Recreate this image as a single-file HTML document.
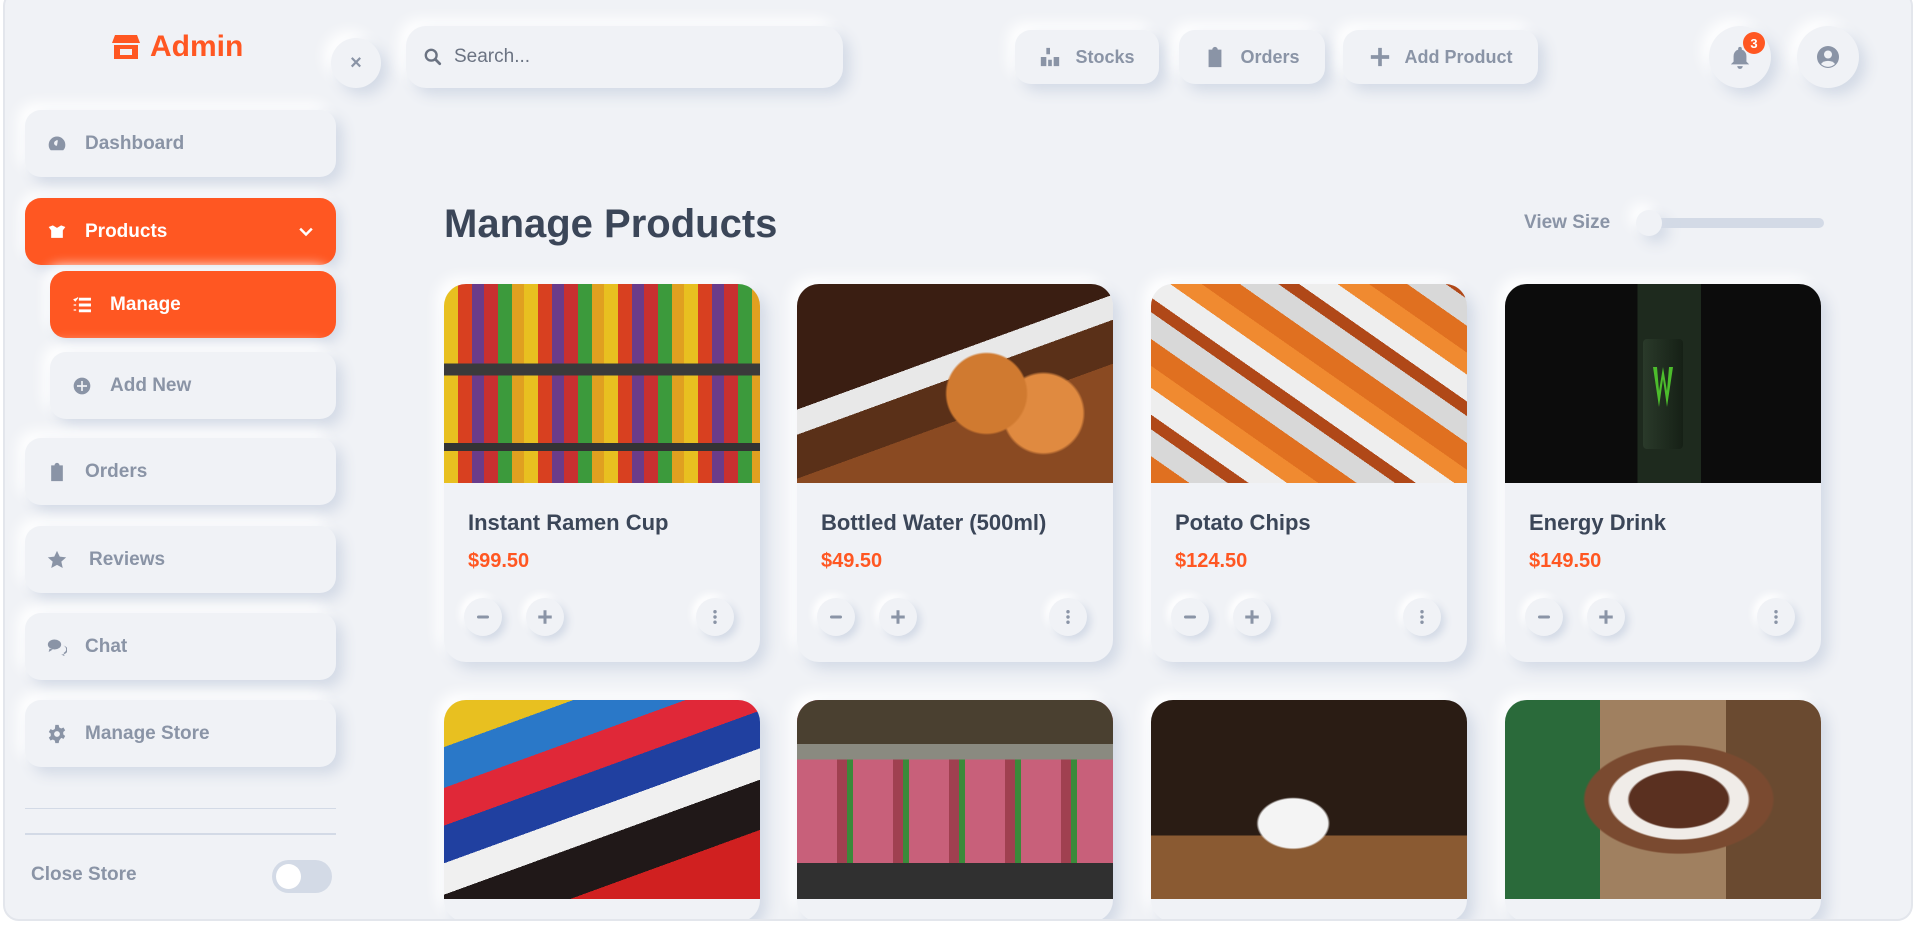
<!DOCTYPE html>
<html><head><meta charset="utf-8"><style>
*{box-sizing:border-box;margin:0;padding:0}
body{width:1920px;height:925px;overflow:hidden;background:#fff;font-family:"Liberation Sans",Arial,sans-serif}
.frame{position:absolute;left:3px;top:-10px;width:1910px;height:931px;background:#f0f2f6;border:2px solid #e3e6ec;border-radius:16px;overflow:hidden}
.abs{position:absolute}
.neu{background:#f0f2f6;box-shadow:7px 7px 14px #d3dae6,-7px -7px 14px #ffffff}
.side{position:absolute;left:20px;width:311px;height:67px;border-radius:16px;display:flex;align-items:center;padding-left:22px;font-weight:bold;font-size:19px;color:#8a94a6}
.side svg{width:20px;height:20px;margin-right:18px;fill:#8a94a6}
.orange{background:#ff5722;color:#fff;box-shadow:5px 5px 12px #d3dae6,-5px -5px 12px #fff}
.orange svg{fill:#fff}
.tb{position:absolute;top:38px;height:54px;border-radius:16px;display:flex;align-items:center;justify-content:center;font-weight:bold;font-size:18px;color:#8a94a6}
.tb svg{width:22px;height:22px;fill:#8a94a6;margin-right:14px}
.circ{position:absolute;border-radius:50%;display:flex;align-items:center;justify-content:center}
.card{position:absolute;width:316px;height:378px;border-radius:22px;overflow:hidden}
.card .img{height:199px}
.card h3{position:absolute;left:24px;top:226px;font-size:22px;color:#3b4658}
.card .p{position:absolute;left:24px;top:266px;font-size:20px;font-weight:bold;color:#ff5722}
.btn{position:absolute;top:314px;width:38px;height:38px;border-radius:50%;background:#f0f2f6;box-shadow:4px 4px 8px #d3dae6,-4px -4px 8px #fff;display:flex;align-items:center;justify-content:center}
.btn svg{width:18px;height:18px;fill:#8a94a6}
.r2{height:222px}
</style></head><body><div class="frame">
<div class="abs" style="left:107px;top:38px;display:flex;align-items:center;color:#ff5722;font-weight:bold;font-size:30px">
<svg width="28" height="26" viewBox="0 0 28 26" style="margin-right:10px"><path fill="#ff5722" d="M3 1h22l3 8H0z"/><path fill="#ff5722" d="M2 11h24v14H2z"/><path fill="#f0f2f6" d="M8 15h12v6H8z"/></svg>Admin</div>
<div class="circ neu" style="left:326px;top:46px;width:50px;height:50px;color:#8a94a6;font-weight:bold;font-size:20px">×</div>
<div class="abs neu" style="left:401px;top:34px;width:437px;height:62px;border-radius:20px;display:flex;align-items:center;padding-left:18px;color:#6b7382;font-size:19px">
<svg width="18" height="18" viewBox="0 0 20 20" style="margin-right:12px"><circle cx="8" cy="8" r="6" fill="none" stroke="#6b7382" stroke-width="2.6"/><path d="M12.5 12.5l5 5" stroke="#6b7382" stroke-width="3" stroke-linecap="round"/></svg>Search...</div>

<div class="tb neu" style="left:1010px;width:144px;top:38px"><svg viewBox="0 0 24 24"><path d="M8 2h4v7H8zM2 12h6v10H2zM10 15h4v7h-4zM16 12h6v10h-6z"/></svg>Stocks</div>
<div class="tb neu" style="left:1174px;width:146px"><svg viewBox="0 0 24 24"><path d="M5 4h4a3 3 0 016 0h4v19H5zM8 9h2v2H8zm4 0h5v2h-5zM8 13h2v2H8zm4 0h5v2h-5zM8 17h2v2H8zm4 0h5v2h-5z"/></svg>Orders</div>
<div class="tb neu" style="left:1338px;width:195px"><svg viewBox="0 0 24 24"><path d="M10 2h4v8h8v4h-8v8h-4v-8H2v-4h8z"/></svg>Add Product</div>
<div class="circ neu" style="left:1704px;top:34px;width:62px;height:62px"><svg width="22" height="24" viewBox="0 0 24 26"><path fill="#8a94a6" d="M12 2a2 2 0 012 2v1a7 7 0 015 7v6l3 3H2l3-3v-6a7 7 0 015-7V4a2 2 0 012-2zM9 23h6a3 3 0 01-6 0z"/></svg>
<div class="circ" style="left:34px;top:6px;width:22px;height:22px;background:#ff5722;color:#fff;font-size:13px;font-weight:bold">3</div></div>
<div class="circ neu" style="left:1792px;top:34px;width:62px;height:62px"><svg width="24" height="24" viewBox="0 0 24 24"><circle cx="12" cy="12" r="11" fill="#8a94a6"/><circle cx="12" cy="9.5" r="4" fill="#f0f2f6"/><path d="M5 19a8 6 0 0114 0 10 10 0 01-14 0z" fill="#f0f2f6"/></svg></div>

<div class="side neu" style="top:118px"><svg viewBox="0 0 24 24"><path d="M12 3a10 10 0 00-10 10c0 3 1 5 2.5 6.5h15A9.5 9.5 0 0022 13 10 10 0 0012 3zm0 4l1 1-1 6a2 2 0 11-1-6z"/></svg>Dashboard</div>
<div class="side orange" style="top:206px"><svg viewBox="0 0 24 24"><path d="M2 6l5-2 5 3 5-3 5 2-3 4v9H5v-9z"/></svg>Products<svg viewBox="0 0 24 24" style="position:absolute;right:20px;margin:0;fill:none;stroke:#fff;stroke-width:3"><path d="M5 8l7 7 7-7"/></svg></div>
<div class="side orange" style="top:279px;left:45px;width:286px;padding-left:22px"><svg viewBox="0 0 24 24"><path d="M2 5l2 2 3-4M2 12h3M2 18h3M9 4h13v2H9zm0 7h13v2H9zm0 7h13v2H9z" stroke="#fff" stroke-width="1.5"/></svg>Manage</div>
<div class="side neu" style="top:360px;left:45px;width:286px;padding-left:22px"><svg viewBox="0 0 24 24"><circle cx="12" cy="12" r="10"/><path d="M11 6h2v5h5v2h-5v5h-2v-5H6v-2h5z" fill="#f0f2f6"/></svg>Add New</div>
<div class="side neu" style="top:446px"><svg viewBox="0 0 24 24"><path d="M5 4h4a3 3 0 016 0h4v19H5zM8 9h2v2H8zm4 0h5v2h-5zM8 13h2v2H8zm4 0h5v2h-5zM8 17h2v2H8zm4 0h5v2h-5z"/></svg>Orders</div>
<div class="side neu" style="top:534px"><svg viewBox="0 0 24 24" style="margin-right:22px"><path d="M12 1l3.3 7 7.7.8-5.8 5.2 1.7 7.6L12 17.8l-6.9 3.8 1.7-7.6L1 8.8 8.7 8z"/></svg>Reviews</div>
<div class="side neu" style="top:621px"><svg viewBox="0 0 24 24"><ellipse cx="9" cy="9" rx="8" ry="6"/><path d="M3 14l-1 4 5-3z"/><path d="M19 10a6 5 0 01-2 11l4 2-1-4a6 5 0 00-1-9z"/></svg>Chat</div>
<div class="side neu" style="top:708px"><svg viewBox="0 0 24 24"><path d="M10 1h4l.6 3 2.4 1.4 2.8-1.2 2 3.4-2.3 2v2.8l2.3 2-2 3.4-2.8-1.2L14.6 20 14 23h-4l-.6-3-2.4-1.4-2.8 1.2-2-3.4 2.3-2V11.6L2.2 9.6l2-3.4L7 7.4 9.4 6z"/><circle cx="12" cy="12" r="3.5" fill="#f0f2f6"/></svg>Manage Store</div>
<div class="abs" style="left:20px;top:816px;width:311px;height:1px;background:#d3dae6"></div>
<div class="abs" style="left:20px;top:841px;width:311px;height:2px;background:#d3dae6"></div>
<div class="abs" style="left:26px;top:872px;font-weight:bold;font-size:19px;color:#8a94a6">Close Store</div>
<div class="abs" style="left:267px;top:868px;width:60px;height:33px;border-radius:17px;background:#d3dae6"><div class="abs" style="left:4px;top:4px;width:25px;height:25px;border-radius:50%;background:#fff"></div></div>

<div class="abs" style="left:439px;top:210px;font-weight:bold;font-size:40px;color:#3b4658">Manage Products</div>
<div class="abs" style="left:1519px;top:220px;font-weight:bold;font-size:19px;color:#8a94a6">View Size</div>
<div class="abs" style="left:1634px;top:226px;width:185px;height:10px;border-radius:5px;background:#d3dae6"></div>
<div class="circ neu" style="left:1631px;top:218px;width:26px;height:26px"></div>

<div class="card neu" style="left:439px;top:292px"><div class="img" style="background:linear-gradient(180deg,transparent 0 40%,#3a3a3a 40% 46%,transparent 46% 80%,#333 80% 84%,transparent 84%),repeating-linear-gradient(90deg,#e8c020 0 14px,#d84020 14px 28px,#6a3c8a 28px 40px,#c83030 40px 54px,#3c9a3c 54px 68px,#e0a020 68px 80px)"></div><h3>Instant Ramen Cup</h3><div class="p">$99.50</div>
<div class="btn" style="left:20px"><svg viewBox="0 0 24 24"><rect x="4" y="10" width="16" height="4" rx="2"/></svg></div><div class="btn" style="left:82px"><svg viewBox="0 0 24 24"><path d="M10 3h4v7h7v4h-7v7h-4v-7H3v-4h7z"/></svg></div><div class="btn" style="left:252px"><svg viewBox="0 0 24 24"><circle cx="12" cy="5" r="2.3"/><circle cx="12" cy="12" r="2.3"/><circle cx="12" cy="19" r="2.3"/></svg></div></div>
<div class="card neu" style="left:792px;top:292px"><div class="img" style="background:radial-gradient(circle at 60% 55%,#d07a30 0 18%,transparent 19%),radial-gradient(circle at 78% 65%,#e08a40 0 14%,transparent 15%),linear-gradient(160deg,#3a1e12 0 40%,#e8e8e8 40% 48%,#5a3018 48% 62%,#8a4a22 62%)"></div><h3>Bottled Water (500ml)</h3><div class="p">$49.50</div>
<div class="btn" style="left:20px"><svg viewBox="0 0 24 24"><rect x="4" y="10" width="16" height="4" rx="2"/></svg></div><div class="btn" style="left:82px"><svg viewBox="0 0 24 24"><path d="M10 3h4v7h7v4h-7v7h-4v-7H3v-4h7z"/></svg></div><div class="btn" style="left:252px"><svg viewBox="0 0 24 24"><circle cx="12" cy="5" r="2.3"/><circle cx="12" cy="12" r="2.3"/><circle cx="12" cy="19" r="2.3"/></svg></div></div>
<div class="card neu" style="left:1146px;top:292px"><div class="img" style="background:repeating-linear-gradient(35deg,#e07020 0 22px,#d8d8d8 22px 44px,#b04818 44px 56px,#eeeeee 56px 78px,#f08a30 78px 96px)"></div><h3>Potato Chips</h3><div class="p">$124.50</div>
<div class="btn" style="left:20px"><svg viewBox="0 0 24 24"><rect x="4" y="10" width="16" height="4" rx="2"/></svg></div><div class="btn" style="left:82px"><svg viewBox="0 0 24 24"><path d="M10 3h4v7h7v4h-7v7h-4v-7H3v-4h7z"/></svg></div><div class="btn" style="left:252px"><svg viewBox="0 0 24 24"><circle cx="12" cy="5" r="2.3"/><circle cx="12" cy="12" r="2.3"/><circle cx="12" cy="19" r="2.3"/></svg></div></div>
<div class="card neu" style="left:1500px;top:292px"><div class="img" style="background:linear-gradient(90deg,transparent 0 42%,#1e2a1e 42% 62%,transparent 62%),#0c0c0c;position:relative"><div class="abs" style="left:138px;top:55px;width:40px;height:110px;background:linear-gradient(90deg,#2a3a2a,#162016);border-radius:4px"><div style="margin:28px 10px;width:20px;height:40px;background:#4cbc2c;clip-path:polygon(0 0,30% 100%,50% 30%,70% 100%,100% 0,80% 0,70% 60%,50% 0,30% 60%,20% 0)"></div></div></div><h3>Energy Drink</h3><div class="p">$149.50</div>
<div class="btn" style="left:20px"><svg viewBox="0 0 24 24"><rect x="4" y="10" width="16" height="4" rx="2"/></svg></div><div class="btn" style="left:82px"><svg viewBox="0 0 24 24"><path d="M10 3h4v7h7v4h-7v7h-4v-7H3v-4h7z"/></svg></div><div class="btn" style="left:252px"><svg viewBox="0 0 24 24"><circle cx="12" cy="5" r="2.3"/><circle cx="12" cy="12" r="2.3"/><circle cx="12" cy="19" r="2.3"/></svg></div></div>

<div class="card neu r2" style="left:439px;top:708px"><div class="img" style="background:linear-gradient(160deg,#e8c020 0 15%,#2a78c8 15% 28%,#e02838 28% 40%,#2040a0 40% 52%,#f0f0f0 52% 62%,#201818 62% 78%,#d02020 78%)"></div></div>
<div class="card neu r2" style="left:792px;top:708px"><div class="img" style="background:linear-gradient(180deg,#4a4030 0 22%,#8a8a80 22% 30%,transparent 30% 82%,#303030 82%),repeating-linear-gradient(90deg,#c8607a 0 40px,#a04050 40px 50px,#3a8a3a 50px 56px),#c8607a"></div></div>
<div class="card neu r2" style="left:1146px;top:708px"><div class="img" style="background:radial-gradient(ellipse at 45% 62%,#f4f4f4 0 14%,transparent 15%),linear-gradient(180deg,#2a1c14 0 68%,#8a5a32 68%)"></div></div>
<div class="card neu r2" style="left:1500px;top:708px"><div class="img" style="background:radial-gradient(ellipse at 55% 50%,#5a3020 0 20%,#f0ece8 21% 28%,#7a4a30 29% 38%,transparent 39%),linear-gradient(90deg,#2a6a3a 0 30%,#a08060 30% 70%,#6a4a30 70%)"></div></div>
</div></body></html>
